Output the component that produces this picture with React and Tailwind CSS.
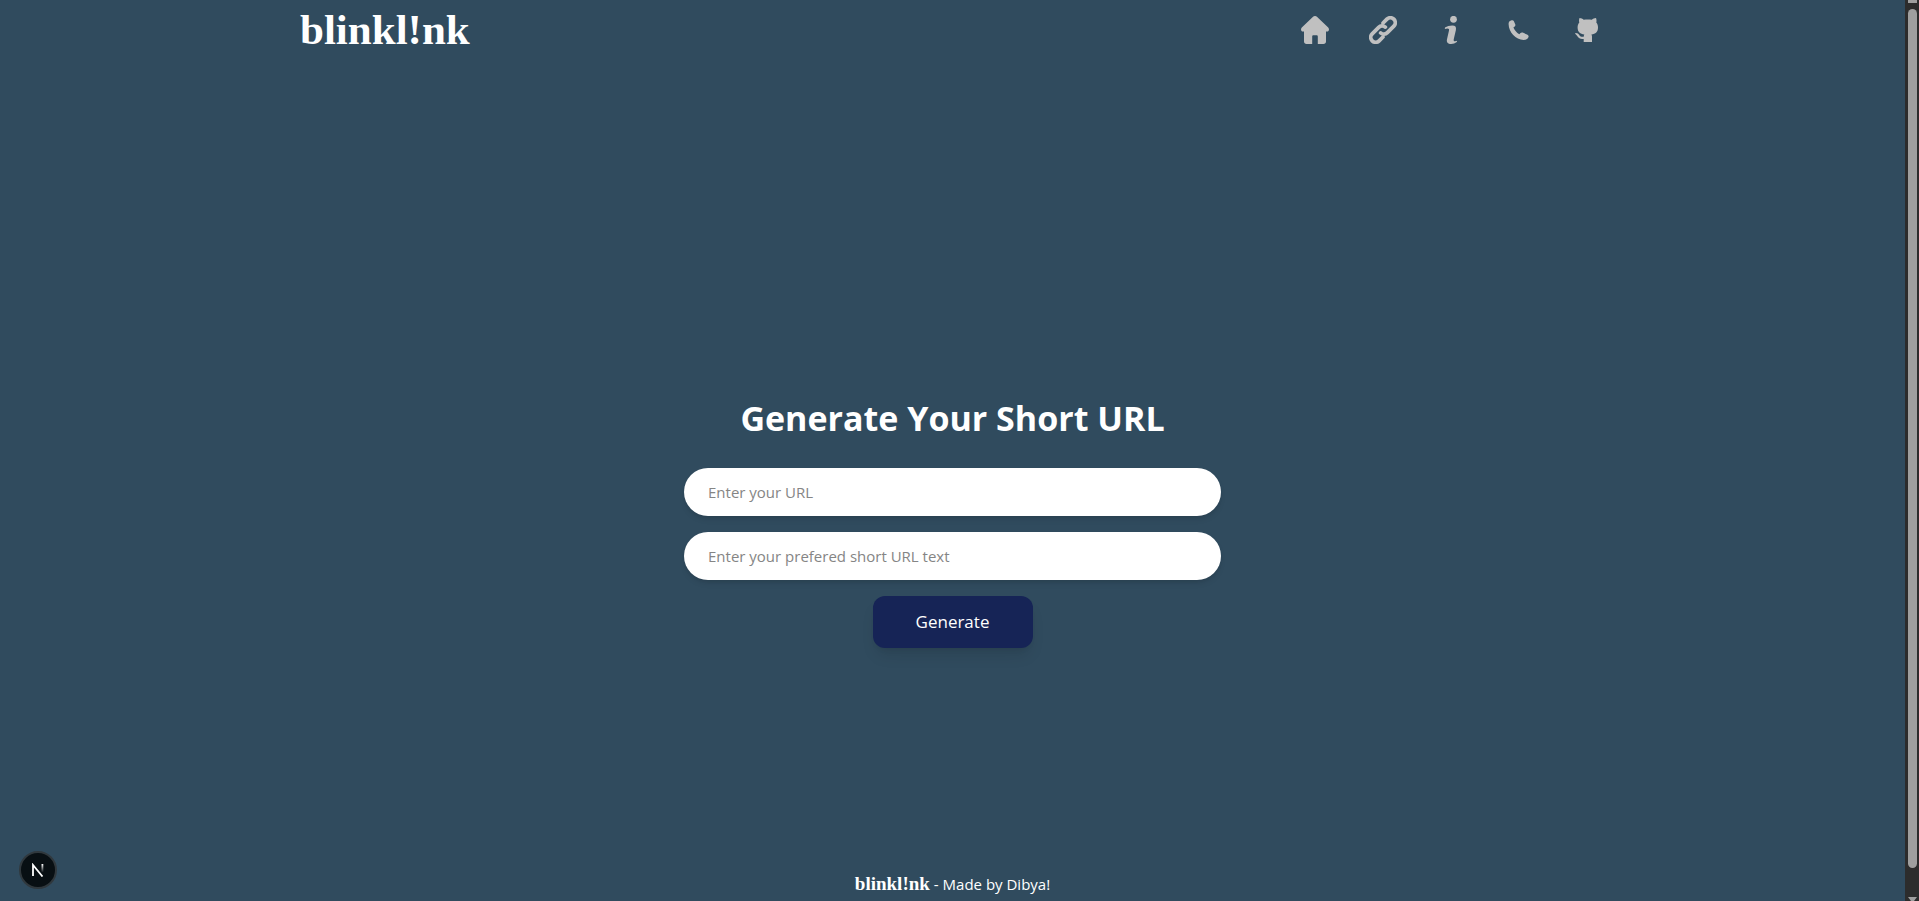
import React from "react";

function Glyph({ children }) {
  return (
    <svg viewBox="0 0 28 28" className="size-7 text-[#c0c0c0]" fill="currentColor" aria-hidden="true">
      {children}
    </svg>
  );
}

const navItems = [
  {
    label: "Home",
    icon: (
      <Glyph>
        <path d="M14 0c.9 0 1.600.3 2.200.9l11 10.600c1.500 1.700.7 4-1.200 4h-1v10c0 1.500-1 2.500-2.500 2.500h-5.700v-7.500c0-.8-.5-1.300-1.300-1.300h-3c-.8 0-1.300.5-1.300 1.300V28H5.500C4 28 3 27 3 25.500V15.500H2c-1.900 0-2.700-2.300-1.200-4L11.800.9C12.400.3 13.100 0 14 0z" />
      </Glyph>
    ),
  },
  {
    label: "Links",
    icon: (
      <Glyph>
        <g
          transform="translate(14 14) rotate(-45)"
          fill="none"
          stroke="currentColor"
          strokeWidth="3.800"
          strokeLinecap="round"
        >
          <path d="M5-4.900H10.400a4.900 4.900 0 0 1 0 9.800H1.200a4.900 4.900 0 0 1-4.900-4.500" />
          <path d="M-5 4.900H-10.400a4.900 4.900 0 0 1 0-9.800H-1.200a4.900 4.900 0 0 1 4.900 4.500" />
        </g>
      </Glyph>
    ),
  },
  {
    label: "About",
    icon: (
      <Glyph>
        <circle cx="16.500" cy="3.300" r="3.400" />
        <path d="M8 11.600c2-1.300 4.500-2 7.200-2 3.200 0 4.300 1.500 3.700 4.300l-2.100 9c-.4 1.600 0 2.300 1.200 2.300.9 0 1.500-.2 2.100-.5l-.3 1.400c-1.700 1.300-3.500 1.900-5.600 1.900-3.400 0-4.900-1.600-4.200-4.700l2-8.700c.4-1.500-.2-2.200-1.700-2.200-.8 0-1.600.2-2.500.5z" />
      </Glyph>
    ),
  },
  {
    label: "Contact",
    icon: (
      <Glyph>
        <path d="M4.900 5.100l1.700-.8c.9-.4 1.900 0 2.300.9l1.400 3.200c.3.800.1 1.600-.6 2.100l-1.300 1c1.200 2.900 3.200 5.200 5.900 6.700l1.200-1.200c.6-.6 1.400-.8 2.200-.4l4.800 2.200c1 .5 1.400 1.500.9 2.500-.9 1.800-2.600 2.800-4.800 2.700C10.700 23.600 3.800 16.200 3.600 8.200c0-1.500.4-2.600 1.300-3.100z" />
      </Glyph>
    ),
  },
  {
    label: "GitHub",
    icon: (
      <Glyph>
        <path d="M6.500 2c1.700.2 3 .8 4.200 1.800 2.600-.5 5.500-.5 8.100 0C20 2.800 21.300 2.200 23 2c.6 1.600.7 3.100.3 4.600 1.200 1.400 1.700 3 1.700 4.900 0 4.500-2.400 6.600-6.600 7 .4.600.6 1.300.6 2.100V26h-8.300v-3.100c-2.900.5-4.900-.3-6.100-2.300-.6-1.100-1.200-1.900-2.200-2.700-.4-.4-.2-.9.400-.9 1.600 0 2.700.8 3.600 2.200.9 1.400 2.300 1.900 4.300 1.500.1-1 .2-1.600.6-2.200-4.100-.4-6.700-2.500-6.700-7 0-1.900.6-3.500 1.700-4.900-.4-1.500-.4-3 .2-4.600z" />
      </Glyph>
    ),
  },
];

const fieldClass =
  "h-12 w-full rounded-[24px] bg-white px-6 text-[15px] text-black shadow-md outline-none placeholder:text-[#858585]";

export default function App() {
  return (
    <div className="flex min-h-screen bg-[#304b5e] font-['Open_Sans','Noto_Sans',sans-serif] text-white">
      <div className="relative flex min-w-0 flex-1 flex-col">
        <header className="flex h-[60px] items-center justify-between pr-[304px] pl-[300px]">
          <a href="#home" className="font-['Liberation_Serif',serif] text-[43px] leading-[48px] font-bold">
            blinkl!nk
          </a>
          <nav aria-label="Main" className="flex gap-10">
            {navItems.map((item) => (
              <a key={item.label} href={"#" + item.label.toLowerCase()} aria-label={item.label}>
                {item.icon}
              </a>
            ))}
          </nav>
        </header>

        <main className="flex flex-1 flex-col items-center justify-center pt-28">
          <h1 className="mb-7 text-[34px] leading-[44px] font-bold">Generate Your Short URL</h1>
          <form className="flex w-full max-w-[537px] flex-col items-center gap-4" onSubmit={(e) => e.preventDefault()}>
            <input type="url" aria-label="URL" placeholder="Enter your URL" className={fieldClass} />
            <input
              type="text"
              aria-label="Short URL text"
              placeholder="Enter your prefered short URL text"
              className={fieldClass}
            />
            <button type="submit" className="h-[52px] w-40 rounded-xl bg-[#162456] text-[17px] shadow-lg">
              Generate
            </button>
          </form>
        </main>

        <footer className="flex items-baseline justify-center gap-1 pb-[5px] text-[15px] leading-6">
          <span className="font-['Liberation_Serif',serif] text-[19px] leading-6 font-bold">blinkl!nk</span>
          <span>- Made by Dibya!</span>
        </footer>

        <button
          type="button"
          aria-label="Open developer tools"
          className="absolute bottom-3 left-[19px] flex size-[38px] items-center justify-center rounded-full border-2 border-[#30383d] bg-[#080f13]"
        >
          <svg viewBox="0 0 14 14" className="size-[14px]" fill="none" aria-hidden="true">
            <defs>
              <linearGradient id="stem" x1="0" y1="0" x2="0" y2="1">
                <stop offset="0" stopColor="#fff" />
                <stop offset="1" stopColor="#fff" stopOpacity="0" />
              </linearGradient>
            </defs>
            <path d="M2 13V2l9.500 11.500" stroke="#fff" strokeWidth="1.800" />
            <rect x="10.500" y="1" width="1.800" height="8.500" fill="url(#stem)" />
          </svg>
        </button>
      </div>

      <div className="flex w-[14px] shrink-0 flex-col items-center justify-between bg-[#2c2c2c]" aria-hidden="true">
        <div className="h-[3px] w-[9px] bg-[#9f9f9f]" />
        <div className="mt-[6px] mb-[29px] w-[9px] flex-1 rounded-full bg-[#9f9f9f]" />
        <svg viewBox="0 0 9 4" className="h-1 w-[9px] fill-[#9f9f9f]">
          <path d="M0 0h9L6 4H3z" />
        </svg>
      </div>
    </div>
  );
}
